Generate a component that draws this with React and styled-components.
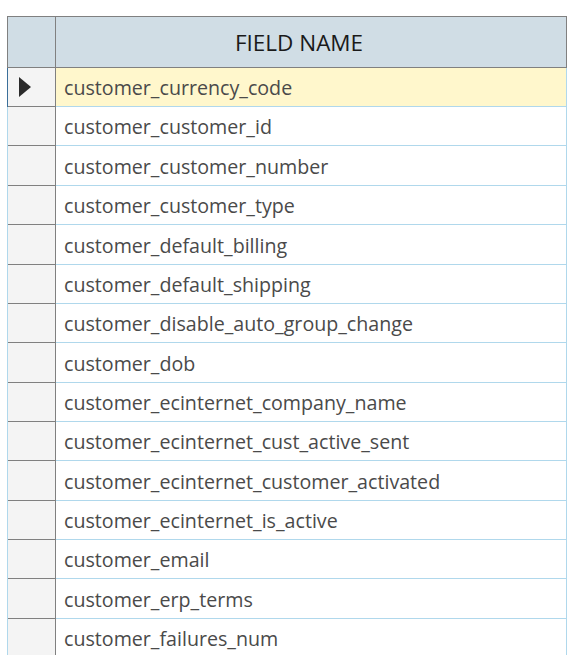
import React from 'react'
import styled, { createGlobalStyle } from 'styled-components'

const GlobalStyle = createGlobalStyle`
  body {
    margin: 0;
    background: #fff;
    font-family: 'Open Sans', 'Noto Sans', sans-serif;
  }
`

const Page = styled.div`
  padding: 16px 0 0 7px;
  width: 567px;
  height: 655px;
  box-sizing: border-box;
  overflow: hidden;
`

const Grid = styled.div`
  width: 560px;
  display: flex;
  flex-direction: column;
`

const HeaderRow = styled.div`
  display: grid;
  grid-template-columns: 48px 1fr;
  height: 52px;
  box-sizing: border-box;
  background-color: #d0dde5;
  border: 1px solid #808080;
`

const HeaderIndicator = styled.div`
  border-right: 1px solid #808080;
`

const HeaderCell = styled.div`
  display: flex;
  align-items: center;
  justify-content: center;
  padding-right: 24px;
  font-size: 22.5px;
  color: #1a1a1a;
`

const Row = styled.div`
  display: grid;
  grid-template-columns: 48px 1fr;
  height: ${({ h }) => h}px;
  box-sizing: border-box;
  border-left: 1px solid ${({ focused }) => (focused ? '#3a6f9a' : '#b0d8ec')};
  border-right: 1px solid #b0d8ec;
`

const Indicator = styled.div`
  background-color: #f4f4f4;
  border-right: 1px solid #808080;
  border-bottom: 1px solid #808080;
  display: flex;
  align-items: center;
  padding-left: 11px;
`

const Arrow = styled.div`
  width: 0;
  height: 0;
  border-top: 10px solid transparent;
  border-bottom: 10px solid transparent;
  border-left: 12px solid #2b2b2b;
`

const Cell = styled.div`
  background-color: ${({ selected }) => (selected ? '#fff7cc' : '#fff')};
  border-bottom: 1px solid #b0d8ec;
  display: flex;
  align-items: center;
  padding: 1px 0 0 8px;
  font-size: 19.65px;
  color: #4a4a4a;
  white-space: nowrap;
`

const fields = [
  'customer_currency_code',
  'customer_customer_id',
  'customer_customer_number',
  'customer_customer_type',
  'customer_default_billing',
  'customer_default_shipping',
  'customer_disable_auto_group_change',
  'customer_dob',
  'customer_ecinternet_company_name',
  'customer_ecinternet_cust_active_sent',
  'customer_ecinternet_customer_activated',
  'customer_ecinternet_is_active',
  'customer_email',
  'customer_erp_terms',
  'customer_failures_num',
]

const heights = [39, 39, 40, 39, 40, 39, 39, 40, 39, 39, 40, 39, 39, 40, 39]

const App = () => {
  return (
    <Page>
      <GlobalStyle />
      <Grid>
        <HeaderRow>
          <HeaderIndicator />
          <HeaderCell>FIELD NAME</HeaderCell>
        </HeaderRow>
        {fields.map((name, i) => (
          <Row key={name} h={heights[i]} focused={i === 0}>
            <Indicator>{i === 0 && <Arrow />}</Indicator>
            <Cell selected={i === 0}>{name}</Cell>
          </Row>
        ))}
      </Grid>
    </Page>
  )
}

export default App
